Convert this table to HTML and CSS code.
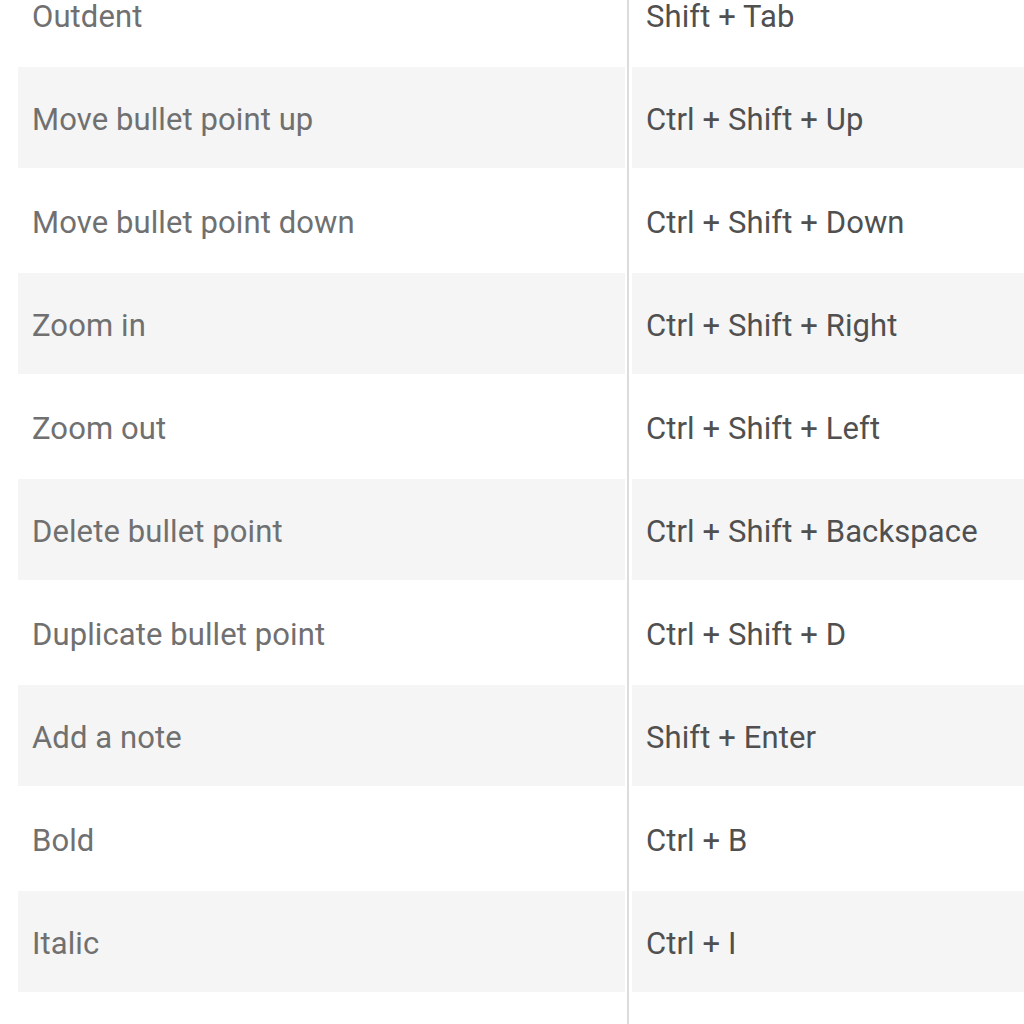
FILE: index.html
```html
<!DOCTYPE html>
<html>
<head>
<meta charset="utf-8">
<link rel="stylesheet" href="styles.css">
</head>
<body>
<div class="table">
  <div class="row"><div class="cell key">Outdent</div><div class="sep"></div><div class="cell val">Shift + Tab</div></div>
  <div class="row alt"><div class="cell key">Move bullet point up</div><div class="sep"></div><div class="cell val">Ctrl + Shift + Up</div></div>
  <div class="row"><div class="cell key">Move bullet point down</div><div class="sep"></div><div class="cell val">Ctrl + Shift + Down</div></div>
  <div class="row alt"><div class="cell key">Zoom in</div><div class="sep"></div><div class="cell val">Ctrl + Shift + Right</div></div>
  <div class="row"><div class="cell key">Zoom out</div><div class="sep"></div><div class="cell val">Ctrl + Shift + Left</div></div>
  <div class="row alt"><div class="cell key">Delete bullet point</div><div class="sep"></div><div class="cell val">Ctrl + Shift + Backspace</div></div>
  <div class="row"><div class="cell key">Duplicate bullet point</div><div class="sep"></div><div class="cell val">Ctrl + Shift + D</div></div>
  <div class="row alt"><div class="cell key">Add a note</div><div class="sep"></div><div class="cell val">Shift + Enter</div></div>
  <div class="row"><div class="cell key">Bold</div><div class="sep"></div><div class="cell val">Ctrl + B</div></div>
  <div class="row alt"><div class="cell key">Italic</div><div class="sep"></div><div class="cell val">Ctrl + I</div></div>
  <div class="row"><div class="cell key">Underline</div><div class="sep"></div><div class="cell val">Ctrl + U</div></div>
</div>
</body>
</html>
```
FILE: styles.css
```css
html, body {
  margin: 0;
  padding: 0;
  background: #ffffff;
  overflow: hidden;
}
body {
  font-family: Roboto, "Liberation Sans", sans-serif;
  width: 1024px;
  height: 1024px;
}
.table {
  margin-top: -36px;
  padding-left: 18px;
  display: flex;
  flex-direction: column;
  gap: 2px;
}
.row {
  display: flex;
  height: 101px;
}
.cell {
  display: flex;
  align-items: center;
  padding: 3px 0 0 14px;
  font-size: 31px;
  letter-spacing: 0.1px;
  box-sizing: border-box;
  white-space: nowrap;
}
.key {
  width: 607px;
  flex: none;
  color: #707070;
}
.val {
  flex: 1;
  color: #505050;
}
.sep {
  width: 2px;
  flex: none;
  margin: -1px 3px -1px 2px;
  background: #dcdcdc;
}
.alt .cell {
  background: #f5f5f5;
}
```
